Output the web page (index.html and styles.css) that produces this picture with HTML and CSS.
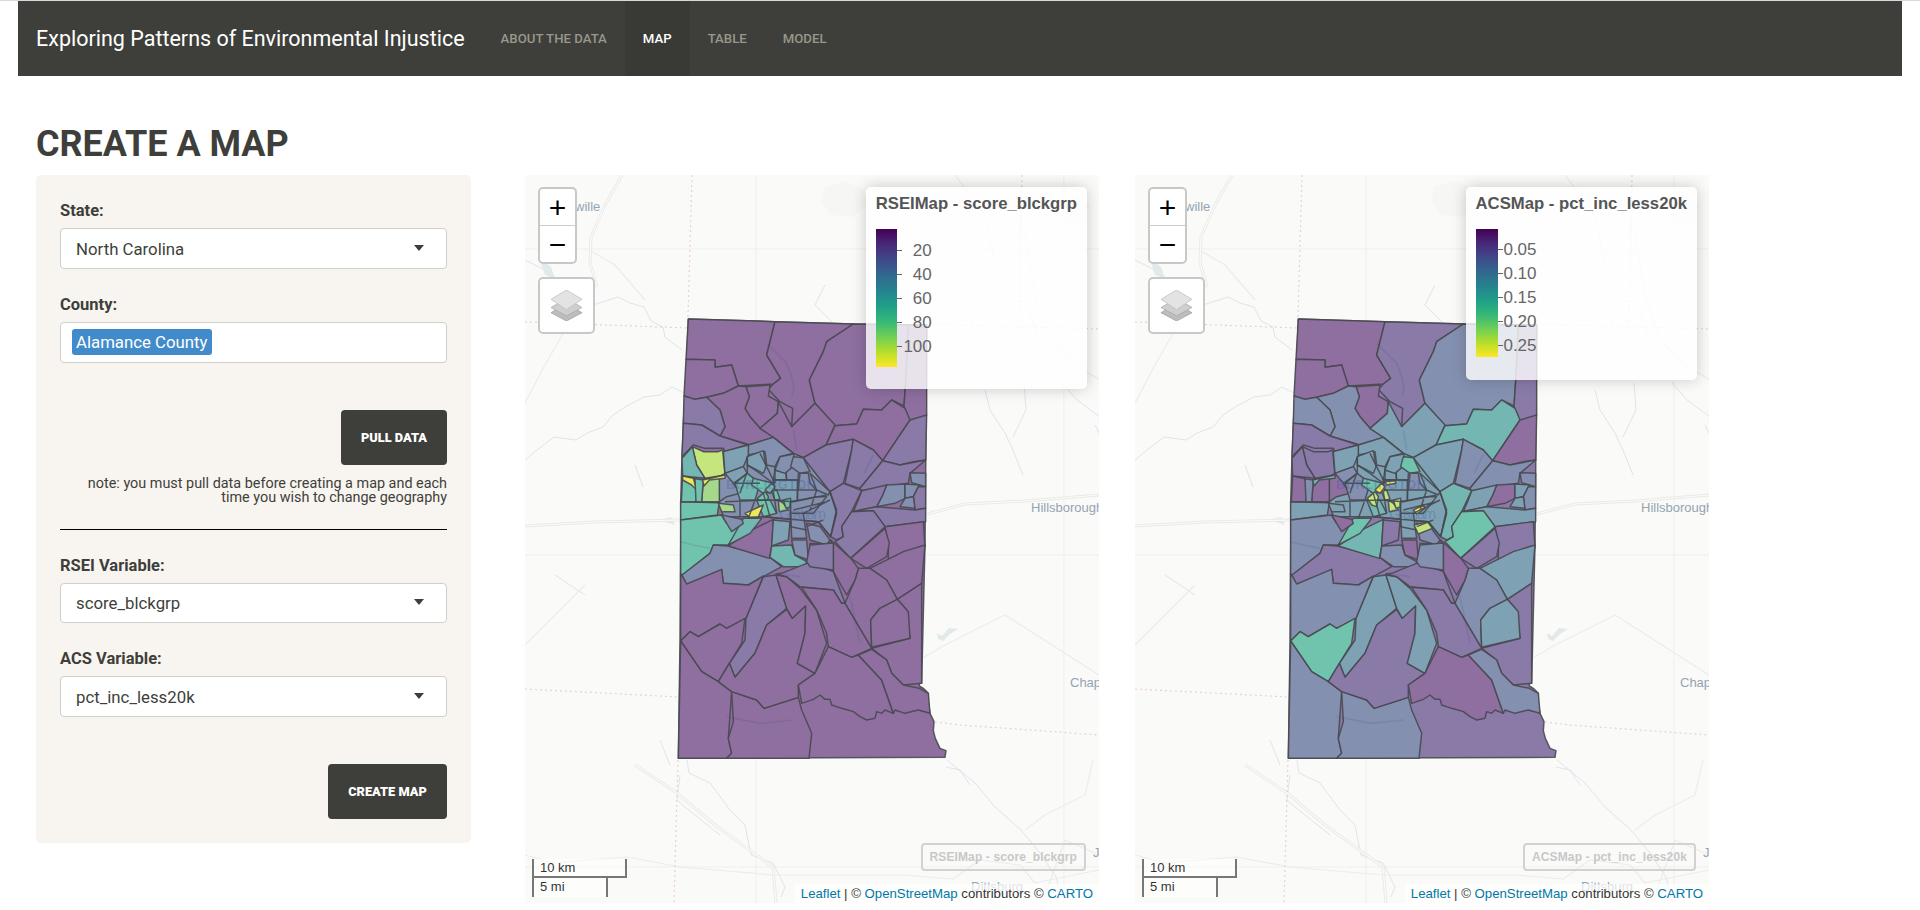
FILE: index.html
```html
<!DOCTYPE html>
<html lang="en">
<head>
<meta charset="utf-8">
<title>Exploring Patterns of Environmental Injustice</title>
<link rel="stylesheet" href="styles.css">
</head>
<body>
<svg class="defs" aria-hidden="true">
  <defs>
    <g id="base">
      <path class="blob" d="M300 12l20-6 18 8 4 16-14 12-22-2-10-14zM535 28l16-8 14 10-8 18-16 0z"/>
      <path class="grid" d="M231 0V728M539 0V728M0 74H574M0 380H574M0 692H574"/>
      <path class="river" d="M0 85L20 95L38 108M68 130L93 122L105 128L119 132L126 146L138 152L140 162L157 175M0 285L12 275L29 262L51 265L62 258L78 252L88 240L100 232L119 222L135 220L147 212L159 218M460 215L465 235L480 258L488 275L498 300M499 208L501 235L488 262M537 208L552 225L575 242M496 42L494 62M505 140L515 165M422 585L450 608L470 632L496 655L515 678L531 702L538 728M162 585L164 598L185 608L205 635L220 650L226 680L248 688L260 712L256 722M110 290L118 312M135 565L145 590M155 600L152 625L160 632L195 660M421 592L435 595L445 610M30 400L60 420M570 250L575 260M300 110L290 130L310 150"/>
      <path class="lake" d="M412 458L417 461L424 453L433 454L425 459L418 466L413 464ZM14 82L26 92L30 104L20 100ZM134 345L146 342L150 350Z"/>
      <path class="road" d="M97 0L80 30L66 62L65 88L72 112M0 351L70 347L156 345M402 339L440 329L500 326L574 320M110 590L152 618L190 650L248 692L251 728"/>
      <path class="road-in" d="M97 0L80 30L66 62L65 88L72 112M0 351L70 347L156 345M402 339L440 329L500 326L574 320M110 590L152 618L190 650L248 692L251 728"/>
      <path class="road-thin" d="M0 680L30 688L102 682L155 692L248 700L380 700L428 704L455 685L495 690L510 708L574 695M66 76L90 90L120 125M40 155L20 190L0 228M40 155L55 125M480 20L500 60L510 120L525 165L550 190L575 205M430 0L460 40L470 90M0 470L30 440L60 410M450 180L470 200M360 505L420 470L480 440L574 500M520 720L540 665L574 680M500 655L520 640L560 620L568 585"/>
      <path class="state" d="M167 0L163 142L160 300M153 585L150 692L149 728M497 0L494 152M0 147L163 153M401 149L575 154M0 514L135 521L152 522M410 547L435 550L574 560"/>
      <text class="town" x="50" y="36">wille</text>
      <text class="town" x="506" y="337">Hillsborough</text>
      <text class="town" x="545" y="512">Chap</text>
      <text class="town" x="568" y="682">J</text>
      <text class="town" x="446" y="716">Dittsburg</text>
    </g>
    <polygon id="t0" points="85,27 345,35 580,42 800,45 797,500 795,705 785,1120 778,1120 778,1128 790,1135 805,1150 805,1175 810,1210 822,1235 820,1262 826,1285 840,1315 858,1322 855,1342 55,1345 60,990 62,690 62,575 66,440 70,340 80,150"/>
    <polygon id="t1" points="85,27 345,35 320,135 362,205 340,222 235,228 215,165 165,172 165,150 78,148"/>
    <polygon id="t2" points="78,148 165,150 165,172 215,165 235,228 190,250 140,262 105,268 72,258"/>
    <polygon id="t3" points="345,35 580,42 500,95 490,125 448,210 465,280 395,350 398,295 360,275 325,238 340,222 362,205 320,135"/>
    <polygon id="t4" points="580,42 745,45 738,200 732,288 695,270 665,300 610,298 590,342 525,347 465,280 448,210 490,125 500,95"/>
    <polygon id="t5" points="745,45 800,45 800,315 755,355 732,288 738,200"/>
    <polygon id="t6" points="258,230 330,225 325,258 355,275 352,310 300,355 270,320 255,295 268,260"/>
    <polygon id="t7" points="140,262 190,250 235,228 258,230 268,260 255,295 270,320 300,355 338,378 330,395 270,405 180,378 195,350 180,300"/>
    <polygon id="t8" points="355,275 395,350 465,280 525,345 498,405 430,443 400,430 340,382 300,355 352,310"/>
    <polygon id="t9" points="525,347 590,342 610,298 665,300 695,270 735,295 750,330 668,452 640,420 580,388 498,405"/>
    <polygon id="t10" points="750,330 800,315 797,450 760,455 720,465 668,452"/>
    <polygon id="t11" points="72,258 105,268 140,262 180,300 195,350 180,378 125,345 70,340"/>
    <polygon id="t12" points="70,340 125,345 180,378 265,405 195,425 190,415 135,415 100,405 66,440"/>
    <polygon id="t13" points="97,410 130,425 175,425 188,420 195,495 135,505 110,465"/>
    <polygon id="t14" points="66,445 97,410 110,465 135,505 68,498"/>
    <polygon id="t15" points="190,425 265,405 340,382 400,430 430,443 510,545 530,600 512,680 475,635 310,620 190,620 178,575 195,495"/>
    <polygon id="t16" points="430,443 498,405 580,388 575,420 550,520 510,545"/>
    <polygon id="t17" points="580,388 640,420 668,452 600,535 555,520 575,420"/>
    <polygon id="t18" points="668,452 720,465 797,450 750,490 745,520 605,542 600,535"/>
    <polygon id="t19" points="750,488 797,490 797,530 755,518"/>
    <polygon id="t20" points="680,525 735,522 735,565 705,580 650,590 668,555"/>
    <polygon id="t21" points="735,522 778,525 760,560 735,565"/>
    <polygon id="t22" points="760,560 775,530 797,530 797,595 765,600"/>
    <polygon id="t23" points="720,590 735,565 760,560 765,595"/>
    <polygon id="t24" points="605,542 680,525 668,555 650,590 580,605 595,570"/>
    <polygon id="t25" points="510,545 550,520 605,542 575,605 545,650 550,680 530,690 512,680 530,610"/>
    <polygon id="t26" points="575,605 650,590 765,600 797,595 797,635 675,650 640,602"/>
    <polygon id="t27" points="575,605 640,602 675,650 572,745 525,695 550,680 545,650"/>
    <polygon id="t28" points="675,650 790,635 795,710 685,750 685,700"/>
    <polygon id="t29" points="572,745 675,655 688,700 680,740 620,775"/>
    <polygon id="t30" points="630,775 660,760 730,725 795,705 785,820 740,850 712,868 680,810"/>
    <polygon id="t31" points="712,868 785,820 785,1120 730,1125 695,1090 680,1050 635,1015 750,985 740,900"/>
    <polygon id="t32" points="595,775 630,775 680,810 712,868 660,895 632,930 635,1015 555,880 585,810"/>
    <polygon id="t33" points="712,868 745,905 750,985 635,1012 632,930 660,895"/>
    <polygon id="t34" points="512,690 575,748 595,775 585,810 560,855 520,785 520,730"/>
    <polygon id="t35" points="450,700 520,705 520,785 480,780 447,750"/>
    <polygon id="t36" points="62,575 178,578 172,615 62,630"/>
    <polygon id="t37" points="62,630 185,615 200,640 250,640 205,705 160,705 150,730 62,800"/>
    <polygon id="t38" points="66,795 150,730 160,705 205,708 330,742 365,770 310,800 265,825 190,820 185,780 80,825"/>
    <polygon id="t39" points="335,708 395,705 405,735 440,755 435,770 370,770 330,742"/>
    <polygon id="t40" points="205,708 265,665 340,628 335,710 328,745"/>
    <polygon id="t41" points="205,705 250,625 305,625 270,670"/>
    <polygon id="t42" points="310,800 348,795 380,895 320,945 285,1030 225,1102 208,1060 255,990 258,925"/>
    <polygon id="t43" points="62,790 80,822 185,778 190,820 265,825 310,798 258,925 200,955 180,942 115,980 90,965 62,993"/>
    <polygon id="t44" points="62,993 90,965 115,980 180,942 200,955 255,925 245,1000 208,1060 175,1115 125,1085"/>
    <polygon id="t45" points="62,993 125,1085 175,1115 215,1145 205,1285 215,1330 200,1345 55,1345"/>
    <polygon id="t46" points="215,1145 290,1170 312,1195 415,1162 425,1200 455,1270 447,1345 200,1345 215,1330 205,1285 220,1235"/>
    <polygon id="t47" points="175,1115 208,1060 225,1102 285,1030 320,945 380,898 397,925 437,887 435,970 412,1060 465,1090 415,1125 415,1162 312,1195 290,1170 215,1145"/>
    <polygon id="t48" points="348,795 380,800 420,835 470,900 500,1000 465,1090 412,1060 435,970 437,887 397,925 380,895"/>
    <polygon id="t49" points="348,792 365,790 440,760 450,760 520,785 555,880 545,880 520,840 420,830 380,800"/>
    <polygon id="t50" points="425,832 520,840 545,880 555,880 635,1015 575,1042 505,1010 500,970 470,900"/>
    <polygon id="t51" points="505,1010 575,1042 595,1035 665,1110 700,1210 675,1200 665,1210 650,1205 645,1225 620,1230 600,1220 580,1205 545,1195 515,1185 510,1168 495,1168 480,1155 460,1168 425,1180 415,1125 465,1090"/>
    <polygon id="t52" points="595,1035 635,1018 680,1050 695,1090 730,1125 778,1135 805,1150 810,1210 775,1200 735,1210 705,1200 700,1210 665,1110"/>
    <polygon id="t53" points="340,630 390,635 385,690 335,708"/>
    <polygon id="t54" points="392,610 430,610 440,685 395,685"/>
    <polygon id="t55" points="440,640 480,650 510,690 500,705 450,690"/>
    <polygon id="t56" points="395,690 440,690 445,750 405,735"/>
    <polygon id="t57" points="450,705 510,700 520,700 520,780 450,770 440,755"/>
    <polygon id="t58" points="185,615 245,628 250,640 215,665 200,640"/>
    <polygon id="u1" points="265,405 340,382 400,430 360,440 345,470 320,465 315,425 265,435"/>
    <polygon id="u2" points="190,425 265,405 265,435 250,470 195,490"/>
    <polygon id="u3" points="262,440 310,422 318,470 310,490 262,465"/>
    <polygon id="u4" points="195,490 250,470 262,490 220,520 205,510"/>
    <polygon id="u5" points="345,480 378,488 380,510 340,510"/>
    <polygon id="u6" points="360,440 400,432 410,460 375,490 345,480"/>
    <polygon id="u7" points="400,440 430,443 450,485 420,490 392,470"/>
    <polygon id="u8" points="420,490 445,490 450,520 470,540 415,540"/>
    <polygon id="u9" points="450,490 510,545 505,555 470,540"/>
    <polygon id="u10" points="178,500 195,490 220,520 240,550 200,560 178,575"/>
    <polygon id="u11" points="68,498 105,506 112,540 108,575 64,575"/>
    <polygon id="u12" points="68,498 100,505 110,540 95,525 68,510"/>
    <polygon id="u13" points="130,510 178,500 178,575 125,575"/>
    <polygon id="u14" points="128,510 195,495 195,505 148,510 132,528"/>
    <polygon id="u15" points="105,506 130,510 125,575 108,575"/>
    <polygon id="u16" points="280,505 340,520 345,545 310,550 275,525"/>
    <polygon id="u17" points="315,540 335,520 345,530 330,550"/>
    <polygon id="u18" points="292,565 315,545 325,560 320,590 305,585"/>
    <polygon id="u19" points="335,545 350,540 360,568 345,570"/>
    <polygon id="u20" points="355,570 370,580 385,600 358,605"/>
    <polygon id="u21" points="370,570 392,565 392,590 378,595"/>
    <polygon id="u22" points="430,600 460,585 465,595 440,612"/>
    <polygon id="u23" points="432,645 472,635 487,655 445,672"/>
    <polygon id="u24" points="175,580 220,585 225,605 185,605"/>
    <polygon id="u25" points="255,610 310,585 295,620 270,622"/>
    <polygon id="u26" points="345,515 375,512 378,520 350,525"/>
    <polygon id="u27" points="290,570 330,570 350,610 310,620"/>
    <polygon id="u28" points="340,510 412,510 412,575 345,570"/>
    <polygon id="u29" points="225,520 262,490 300,520 285,570 240,570"/>
    <polygon id="u30" points="392,575 470,560 500,560 460,610 392,610"/>
    <path id="lines" d="M262,465L300,490L340,520M345,470L345,520M300,430L345,520M378,490L380,510L412,510M340,510L415,510M345,540L415,540M415,490L412,575M260,490L240,550M195,575L330,570M330,570L400,575L500,555M390,575L392,650M340,545L350,610M310,550L330,620M240,575L240,620M285,570L265,625M400,600L500,575M430,610L510,570M470,540L450,600M440,650L490,630M310,620L475,635L512,680M392,650L440,660M510,545L530,600L512,680M262,440L262,490M300,520L225,520"/>
    <path id="wash" d="M320,100L350,130L380,160L395,200L402,240L395,260M400,360L410,420M612,490L640,435M60,695L100,705L150,715M350,790L420,800M570,860L600,1000M200,1220L300,1240L400,1230"/>
    <g id="labels">
      <text class="tile" x="198" y="537" textLength="270">BURLINGTON</text>
      <text class="tile tile-sm" x="358" y="627" textLength="140">Graham</text>
    </g>
  </defs>
</svg>

<header class="navbar">
  <span class="brand">Exploring Patterns of Environmental Injustice</span>
  <nav class="nav">
    <a class="nav-link">About the data</a>
    <a class="nav-link active">Map</a>
    <a class="nav-link">Table</a>
    <a class="nav-link">Model</a>
  </nav>
</header>

<main class="content">
  <h1 class="title">CREATE A MAP</h1>
  <div class="layout">
    <form class="panel">
      <label class="label">State:</label>
      <div class="select"><span>North Carolina</span><i class="caret"></i></div>
      <label class="label gap">County:</label>
      <div class="select"><span class="chip">Alamance County</span></div>
      <button class="btn pull" type="button">Pull data</button>
      <p class="note">note: you must pull data before creating a map and each<br>time you wish to change geography</p>
      <hr class="rule">
      <label class="label">RSEI Variable:</label>
      <div class="select"><span>score_blckgrp</span><i class="caret"></i></div>
      <label class="label gap">ACS Variable:</label>
      <div class="select"><span>pct_inc_less20k</span><i class="caret"></i></div>
      <button class="btn create" type="button">Create map</button>
    </form>

    <section class="map">
      <svg class="canvas" viewBox="0 0 574 728">
        <use href="#base"/>
        <g class="tracts" transform="translate(135 135) scale(.33333)">
          <use href="#t0" class="c0"/><use href="#t1" class="c0"/><use href="#t2" class="c0"/><use href="#t3" class="c0"/><use href="#t4" class="c0"/><use href="#t5" class="c0"/><use href="#t6" class="c0"/><use href="#t7" class="c0"/><use href="#t8" class="c0"/><use href="#t9" class="c0"/><use href="#t10" class="c1"/><use href="#t11" class="c1"/><use href="#t12" class="c1"/><use href="#t15" class="c2"/><use href="#t13" class="c6"/><use href="#t14" class="c4"/><use href="#t16" class="c1"/><use href="#t17" class="c1"/><use href="#t18" class="c1"/><use href="#t19" class="c2"/><use href="#t20" class="c2"/><use href="#t21" class="c2"/><use href="#t22" class="c1"/><use href="#t23" class="c2"/><use href="#t24" class="c1"/><use href="#t25" class="c1"/><use href="#t26" class="c1"/><use href="#t27" class="c1"/><use href="#t28" class="c0"/><use href="#t29" class="c0"/><use href="#t30" class="c0"/><use href="#t31" class="c0"/><use href="#t32" class="c0"/><use href="#t33" class="c0"/><use href="#t34" class="c0"/><use href="#t35" class="c1"/><use href="#t36" class="c5"/><use href="#t37" class="c5"/><use href="#t38" class="c2"/><use href="#t40" class="c0"/><use href="#t41" class="c4"/><use href="#t39" class="c4"/><use href="#t42" class="c1"/><use href="#t43" class="c0"/><use href="#t44" class="c0"/><use href="#t45" class="c0"/><use href="#t46" class="c0"/><use href="#t47" class="c0"/><use href="#t48" class="c0"/><use href="#t49" class="c1"/><use href="#t50" class="c0"/><use href="#t51" class="c0"/><use href="#t52" class="c0"/><use href="#t53" class="c3"/><use href="#t54" class="c2"/><use href="#t55" class="c2"/><use href="#t56" class="c2"/><use href="#t57" class="c1"/><use href="#t58" class="c2"/>
          <use href="#u1" class="c2"/><use href="#u2" class="c3"/><use href="#u3" class="c3"/><use href="#u4" class="c3"/><use href="#u5" class="c3"/><use href="#u6" class="c2"/><use href="#u7" class="c2"/><use href="#u8" class="c2"/><use href="#u9" class="c2"/><use href="#u10" class="c2"/><use href="#u11" class="c5"/><use href="#u12" class="c7"/><use href="#u13" class="c8"/><use href="#u15" class="c5"/><use href="#u14" class="c7"/><use href="#u28" class="c3"/><use href="#u29" class="c4"/><use href="#u16" class="c5"/><use href="#u17" class="c4"/><use href="#u18" class="c5"/><use href="#u19" class="c5"/><use href="#u20" class="c8"/><use href="#u21" class="c5"/><use href="#u27" class="c5"/><use href="#u24" class="c8"/><use href="#u25" class="c7"/><use href="#u30" class="c2"/>
          <use href="#lines" class="nofill"/>
          <use href="#wash" class="wash"/>
          <use href="#labels"/>
        </g>
      </svg>
      <div class="zoom"><a class="zoom-btn">+</a><a class="zoom-btn">&#8722;</a></div>
      <div class="layers">
        <svg class="layers-icon" viewBox="0 0 30 30"><path class="l3" d="M15 13L30 22L15 30L0 22Z"/><path class="l2" d="M15 8L30 17L15 25L0 17Z"/><path class="l1" d="M15 0L30 9L15 19L0 9Z"/></svg>
      </div>
      <div class="legend">
        <div class="legend-title">RSEIMap - score_blckgrp</div>
        <div class="legend-scale">
          <div class="legend-bar tall"></div>
          <ul class="ticks">
            <li class="tick"><span class="tick-num">20</span></li>
            <li class="tick"><span class="tick-num">40</span></li>
            <li class="tick"><span class="tick-num">60</span></li>
            <li class="tick"><span class="tick-num">80</span></li>
            <li class="tick"><span class="tick-num">100</span></li>
          </ul>
        </div>
      </div>
      <div class="stamp">RSEIMap - score_blckgrp</div>
      <div class="scale"><div class="scale-km">10 km</div><div class="scale-mi">5 mi</div></div>
      <div class="attribution"><a>Leaflet</a> | © <a>OpenStreetMap</a> contributors © <a>CARTO</a></div>
    </section>

    <section class="map">
      <svg class="canvas" viewBox="0 0 574 728">
        <use href="#base"/>
        <g class="tracts" transform="translate(135 135) scale(.33333)">
          <use href="#t0" class="c1"/><use href="#t1" class="c0"/><use href="#t2" class="c0"/><use href="#t3" class="c1"/><use href="#t4" class="c2"/><use href="#t5" class="c1"/><use href="#t6" class="c0"/><use href="#t7" class="c2"/><use href="#t8" class="c3"/><use href="#t9" class="c4"/><use href="#t10" class="c0"/><use href="#t11" class="c2"/><use href="#t12" class="c1"/><use href="#t15" class="c3"/><use href="#t13" class="c1"/><use href="#t14" class="c1"/><use href="#t16" class="c3"/><use href="#t17" class="c2"/><use href="#t18" class="c2"/><use href="#t19" class="c2"/><use href="#t20" class="c0"/><use href="#t21" class="c3"/><use href="#t22" class="c2"/><use href="#t23" class="c3"/><use href="#t24" class="c3"/><use href="#t25" class="c4"/><use href="#t26" class="c3"/><use href="#t27" class="c5"/><use href="#t28" class="c1"/><use href="#t29" class="c1"/><use href="#t30" class="c3"/><use href="#t31" class="c1"/><use href="#t32" class="c2"/><use href="#t33" class="c3"/><use href="#t34" class="c0"/><use href="#t35" class="c2"/><use href="#t36" class="c3"/><use href="#t37" class="c2"/><use href="#t38" class="c1"/><use href="#t40" class="c4"/><use href="#t41" class="c5"/><use href="#t39" class="c2"/><use href="#t42" class="c3"/><use href="#t43" class="c2"/><use href="#t44" class="c5"/><use href="#t45" class="c2"/><use href="#t46" class="c2"/><use href="#t47" class="c1"/><use href="#t48" class="c3"/><use href="#t49" class="c1"/><use href="#t50" class="c1"/><use href="#t51" class="c0"/><use href="#t52" class="c2"/><use href="#t53" class="c1"/><use href="#t54" class="c3"/><use href="#t55" class="c2"/><use href="#t56" class="c0"/><use href="#t57" class="c2"/><use href="#t58" class="c0"/>
          <use href="#u1" class="c3"/><use href="#u2" class="c3"/><use href="#u3" class="c3"/><use href="#u4" class="c2"/><use href="#u5" class="c3"/><use href="#u6" class="c3"/><use href="#u7" class="c5"/><use href="#u8" class="c2"/><use href="#u9" class="c3"/><use href="#u10" class="c0"/><use href="#u11" class="c0"/><use href="#u13" class="c0"/><use href="#u15" class="c2"/><use href="#u14" class="c4"/><use href="#u28" class="c3"/><use href="#u29" class="c2"/><use href="#u16" class="c5"/><use href="#u27" class="c4"/><use href="#u17" class="c7"/><use href="#u18" class="c6"/><use href="#u19" class="c6"/><use href="#u20" class="c6"/><use href="#u21" class="c6"/><use href="#u26" class="c7"/><use href="#u24" class="c3"/><use href="#u30" class="c3"/><use href="#u22" class="c7"/><use href="#u23" class="c6"/>
          <use href="#lines" class="nofill"/>
          <use href="#wash" class="wash"/>
          <use href="#labels"/>
        </g>
      </svg>
      <div class="zoom"><a class="zoom-btn">+</a><a class="zoom-btn">&#8722;</a></div>
      <div class="layers">
        <svg class="layers-icon" viewBox="0 0 30 30"><path class="l3" d="M15 13L30 22L15 30L0 22Z"/><path class="l2" d="M15 8L30 17L15 25L0 17Z"/><path class="l1" d="M15 0L30 9L15 19L0 9Z"/></svg>
      </div>
      <div class="legend">
        <div class="legend-title">ACSMap - pct_inc_less20k</div>
        <div class="legend-scale">
          <div class="legend-bar short"></div>
          <ul class="ticks ticks-short">
            <li class="tick"><span class="tick-num wide">0.05</span></li>
            <li class="tick"><span class="tick-num wide">0.10</span></li>
            <li class="tick"><span class="tick-num wide">0.15</span></li>
            <li class="tick"><span class="tick-num wide">0.20</span></li>
            <li class="tick"><span class="tick-num wide">0.25</span></li>
          </ul>
        </div>
      </div>
      <div class="stamp">ACSMap - pct_inc_less20k</div>
      <div class="scale"><div class="scale-km">10 km</div><div class="scale-mi">5 mi</div></div>
      <div class="attribution"><a>Leaflet</a> | © <a>OpenStreetMap</a> contributors © <a>CARTO</a></div>
    </section>
  </div>
</main>
</body>
</html>
```
FILE: styles.css
```css
* { box-sizing: border-box; }
html, body { margin: 0; padding: 0; background: #fff; }
body {
  font-family: Roboto, "Liberation Sans", sans-serif;
  color: #3e3f3a;
  border-top: 1px solid #d9d9d9;
  height: 910px;
  overflow: hidden;
}
.defs { display: block; width: 0; height: 0; overflow: hidden; }

/* navbar */
.navbar {
  display: flex;
  align-items: stretch;
  height: 75px;
  margin: 0 18px;
  padding-left: 18px;
  background: #3e3f3a;
}
.brand {
  align-self: center;
  margin-top: -1px;
  font-size: 21.5px;
  color: #fff;
  white-space: nowrap;
}
.nav { display: flex; margin-left: 18px; }
.nav-link {
  display: flex;
  align-items: center;
  padding: 0 18px;
  font-size: 13.2px;
  font-weight: 500;
  text-transform: uppercase;
  color: #98978b;
}
.nav-link.active { color: #fff; background: #393a35; }

/* page */
.content { padding: 0 36px; }
.title {
  margin: 0;
  padding-top: 47px;
  height: 99px;
  font-size: 36px;
  line-height: 42px;
  font-weight: 700;
  color: #3e3f3a;
}
.layout {
  display: grid;
  grid-template-columns: 453px 574px 574px;
  column-gap: 36px;
  align-items: start;
}

/* sidebar */
.panel {
  display: flex;
  flex-direction: column;
  width: 435px;
  height: 668px;
  padding: 25px 24px 24px;
  background: #f8f5f0;
  border-radius: 5px;
}
.label {
  height: 20px;
  margin-bottom: 8px;
  padding-top: 1px;
  font-size: 16.5px;
  line-height: 20px;
  font-weight: 700;
}
.label.gap { margin-top: 25px; }
.select {
  display: flex;
  align-items: center;
  justify-content: space-between;
  height: 41px;
  padding: 1px 22px 0 15px;
  font-size: 16.8px;
  background: #fff;
  border: 1px solid #cfcfcb;
  border-radius: 4px;
}
.caret {
  width: 0;
  height: 0;
  margin-top: -2px;
  border-style: solid;
  border-width: 6px 5.5px 0;
  border-color: #3e3f3a transparent transparent;
}
.chip {
  margin: -2px 0 0 -4px;
  padding: 0 4px;
  height: 26px;
  line-height: 26px;
  color: #fff;
  background: #428bca;
  border-radius: 3px;
}
.btn {
  align-self: flex-end;
  height: 55px;
  padding: 0;
  font-family: inherit;
  font-size: 12.8px;
  font-weight: 900;
  text-transform: uppercase;
  color: #fff;
  background: #3e3f3a;
  border: 0;
  border-radius: 4px;
}
.pull { width: 106px; margin-top: 47px; }
.create { width: 119px; margin-top: 47px; }
.note {
  margin: 12px 0 0;
  font-size: 14.4px;
  line-height: 14px;
  text-align: right;
}
.rule {
  width: 100%;
  margin: 24px 0 25px;
  border: 0;
  border-top: 1px solid #000;
}

/* map */
.map {
  position: relative;
  height: 728px;
  overflow: hidden;
  background: #fafaf8;
  font-family: "Liberation Sans", Arial, sans-serif;
}
.canvas { position: absolute; inset: 0; width: 574px; height: 728px; }
.blob { fill: #f6f6f4; }
.grid { fill: none; stroke: #efefed; stroke-width: 1; }
.river { fill: none; stroke: #dde6ea; stroke-width: 1; stroke-linejoin: round; }
.lake { fill: #e2e9eb; stroke: none; }
.road { fill: none; stroke: #e9e9e7; stroke-width: 3; stroke-linejoin: round; }
.road-in { fill: none; stroke: #fbfbf9; stroke-width: 1.2; stroke-linejoin: round; }
.road-thin { fill: none; stroke: #ececea; stroke-width: 1.2; stroke-linejoin: round; }
.state { fill: none; stroke: #eccfd3; stroke-width: 1.2; stroke-dasharray: 2 3; }
.town { font-size: 13px; fill: #93a4b2; stroke: #fafaf8; stroke-width: 2; paint-order: stroke; }

.tracts { stroke: #48484e; stroke-width: 4.4; stroke-linejoin: round; stroke-opacity: .88; }
.c0 { fill: #8e6fa0; }
.c1 { fill: #897aa8; }
.c2 { fill: #8490b0; }
.c3 { fill: #7ea2b4; }
.c4 { fill: #74b6b2; }
.c5 { fill: #70c4ae; }
.c6 { fill: #c4e67c; }
.c7 { fill: #ece85c; }
.c8 { fill: #a6d88c; }
.nofill { fill: none; }
.wash { fill: none; stroke: #4a4a85; stroke-width: 5; stroke-opacity: .16; }
.tile { font-size: 38px; font-weight: 700; fill: #3d5a9c; fill-opacity: .32; stroke: none; }
.tile-sm { font-size: 44px; font-weight: 400; }

.zoom {
  position: absolute;
  left: 13px;
  top: 12px;
  width: 39px;
  background: #fff;
  border: 2px solid #c8c8c8;
  border-radius: 5px;
}
.zoom-btn {
  display: block;
  height: 36px;
  font-size: 30px;
  line-height: 37px;
  text-align: center;
  color: #000;
}
.zoom-btn + .zoom-btn { height: 37px; border-top: 1px solid #ccc; }
.layers {
  position: absolute;
  left: 13px;
  top: 102px;
  display: flex;
  align-items: center;
  justify-content: center;
  width: 57px;
  height: 57px;
  background: #fff;
  border: 2px solid #c8c8c8;
  border-radius: 5px;
}
.layers-icon { width: 31px; height: 31px; }
.l1 { fill: #e3e3e3; stroke: #bdbdbd; stroke-width: .7; }
.l2 { fill: #cfcfcf; stroke: #a8a8a8; stroke-width: .7; }
.l3 { fill: #bdbdbd; stroke: #9d9d9d; stroke-width: .7; }

.legend {
  position: absolute;
  top: 12px;
  right: 12px;
  padding: 8px 10px 22px;
  color: #555;
  background: rgba(255, 255, 255, .8);
  border-radius: 5px;
  box-shadow: 0 0 15px rgba(0, 0, 0, .2);
}
.legend-title {
  margin-bottom: 16px;
  font-size: 16.7px;
  line-height: 18px;
  font-weight: 700;
  white-space: nowrap;
}
.legend-scale { display: flex; align-items: flex-start; }
.legend-bar {
  width: 21px;
  background: linear-gradient(#440154, #482878, #3e4989, #31688e, #26828e, #1f9e89, #35b779, #6ece58, #b5de2b, #fde725);
}
.legend-bar.tall { height: 138px; }
.legend-bar.short { height: 128px; width: 22px; }
.ticks { margin: 0; padding: 10px 0 0; list-style: none; color: #666; }
.ticks-short { padding-top: 9px; }
.tick {
  position: relative;
  display: flex;
  align-items: center;
  justify-content: flex-end;
  height: 24px;
  padding-left: 5px;
  font-size: 17px;
  line-height: 24px;
}
.tick::before {
  content: "";
  position: absolute;
  left: 0;
  top: 11px;
  width: 5px;
  height: 1px;
  background: #666;
}
.tick-num { display: block; width: 30px; text-align: right; }
.tick-num.wide { width: 34px; }

.stamp {
  position: absolute;
  right: 13px;
  bottom: 32px;
  height: 28px;
  padding: 0 7px;
  font-size: 12px;
  line-height: 24px;
  font-weight: 700;
  letter-spacing: .12px;
  color: #c8c8c8;
  border: 2px solid #d2d2d2;
  border-radius: 4px;
}
.scale { position: absolute; left: 7px; bottom: 6px; font-size: 13px; color: #333; }
.scale-km, .scale-mi {
  height: 19px;
  padding-left: 6px;
  line-height: 17px;
  background: rgba(255, 255, 255, .5);
  border: 2px solid #777;
  border-top: 0;
}
.scale-km { width: 95px; }
.scale-mi { width: 76px; border-bottom: 0; }
.attribution {
  position: absolute;
  right: 0;
  bottom: 0;
  height: 19px;
  padding: 0 6px;
  font-size: 13.2px;
  line-height: 19px;
  color: #333;
  background: rgba(255, 255, 255, .7);
  white-space: nowrap;
}
.attribution a { color: #0078a8; }
```
